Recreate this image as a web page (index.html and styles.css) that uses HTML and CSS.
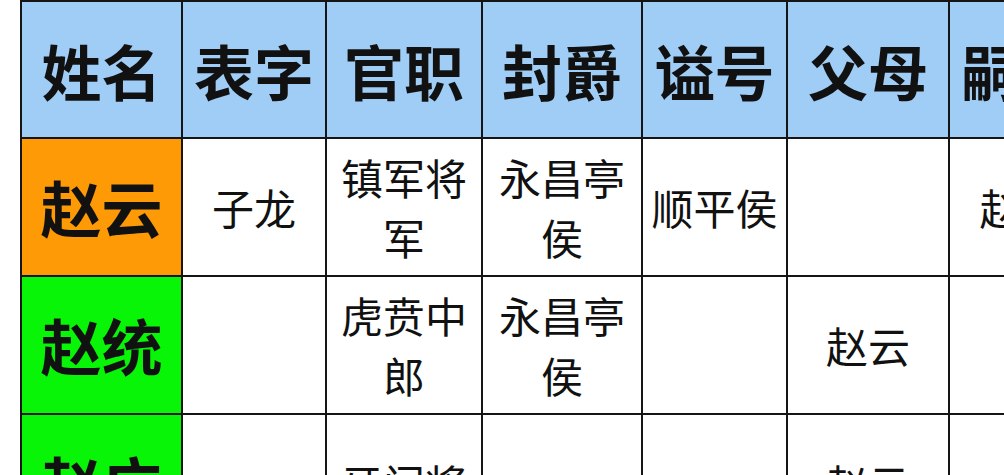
FILE: index.html
```html
<!DOCTYPE html>
<html lang="zh">
<head>
<meta charset="utf-8">
<title>赵云家族</title>
<link rel="stylesheet" href="styles.css">
</head>
<body>
<div class="sheet">
  <table class="grid">
    <colgroup>
      <col class="c-name">
      <col class="c-zi">
      <col class="c-guan">
      <col class="c-feng">
      <col class="c-shi">
      <col class="c-fu">
      <col class="c-si">
    </colgroup>
    <thead>
      <tr class="head">
        <th>姓名</th><th>表字</th><th>官职</th><th>封爵</th><th>谥号</th><th>父母</th><th>嗣子</th>
      </tr>
    </thead>
    <tbody>
      <tr>
        <th class="name orange">赵云</th>
        <td>子龙</td>
        <td>镇军将军</td>
        <td>永昌亭侯</td>
        <td>顺平侯</td>
        <td></td>
        <td>赵统</td>
      </tr>
      <tr>
        <th class="name green">赵统</th>
        <td></td>
        <td>虎贲中郎</td>
        <td>永昌亭侯</td>
        <td></td>
        <td>赵云</td>
        <td></td>
      </tr>
      <tr>
        <th class="name green">赵广</th>
        <td></td>
        <td>牙门将</td>
        <td></td>
        <td></td>
        <td>赵云</td>
        <td></td>
      </tr>
    </tbody>
  </table>
</div>
</body>
</html>
```
FILE: styles.css
```css
html, body {
  margin: 0;
  padding: 0;
  background: #ffffff;
  overflow: hidden;
}

body {
  width: 1004px;
  height: 475px;
  font-family: "Noto Sans CJK SC", "Noto Sans", sans-serif;
  color: #111111;
}

.sheet {
  padding-left: 20px;
  width: 1200px;
}

.grid {
  border-collapse: collapse;
  table-layout: fixed;
  width: 1073px;
}

.c-name { width: 161px; }
.c-zi { width: 144px; }
.c-guan { width: 156px; }
.c-feng { width: 160px; }
.c-shi { width: 145px; }
.c-fu { width: 162px; }
.c-si { width: 145px; }

.grid th,
.grid td {
  border: 2px solid #151515;
  text-align: center;
  vertical-align: middle;
  padding: 0 6px;
  overflow: hidden;
}

.head th {
  height: 135px;
  background: #a0cdf6;
  font-size: 60px;
  font-weight: 700;
  line-height: 1.2;
  white-space: nowrap;
}

.grid tbody td,
.grid tbody th {
  height: 136px;
}

.grid tbody td {
  font-size: 42px;
  font-weight: 400;
  line-height: 1.42;
  background: #ffffff;
}

.name {
  font-size: 61px;
  font-weight: 700;
  line-height: 1.2;
  white-space: nowrap;
}

.orange { background: #fe9a05; }
.green { background: #08f508; }
```
